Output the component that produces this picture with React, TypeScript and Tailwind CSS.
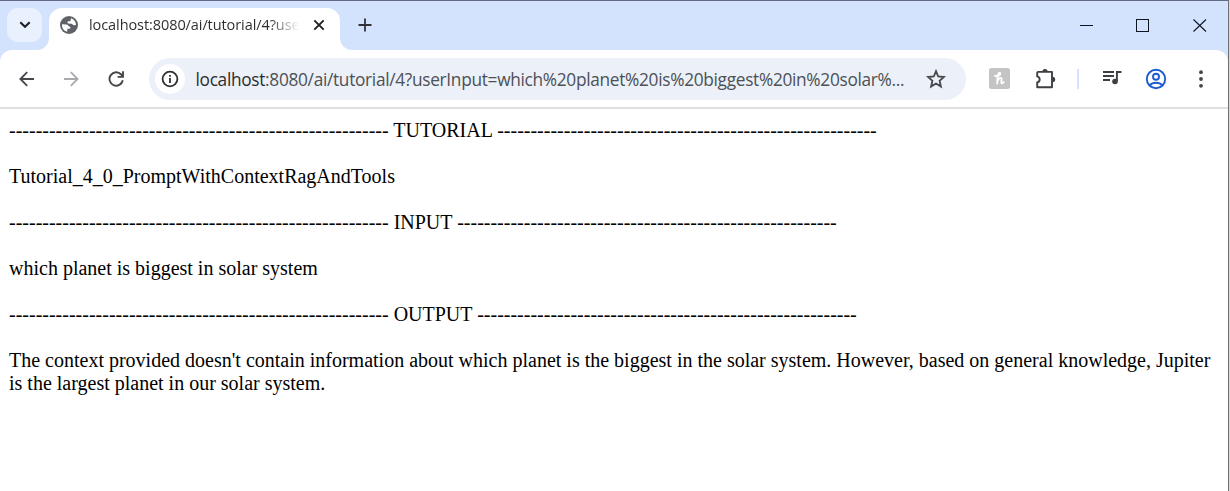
import React from "react";

const DASHES = "-".repeat(57);

function TabFoot({ flip = false }: { flip?: boolean }) {
  return (
    <svg width="12" height="12" viewBox="0 0 12 12" className={flip ? "shrink-0 -scale-x-100" : "shrink-0"}>
      <path d="M12 0v12H0A12 12 0 0 0 12 0Z" fill="#fff" />
    </svg>
  );
}

function TabStrip() {
  return (
    <div className="flex h-[50px] items-end border-t border-[#636b83] bg-[#d3e3fd]">
      <div className="mb-[8px] ml-[7px] flex h-[34px] w-[35px] shrink-0 items-center justify-center rounded-[11px] bg-[#e9f1fe]">
        <svg width="12" height="8" viewBox="0 0 12 8" fill="none" stroke="#1f2024" strokeWidth="2.1">
          <path d="M1.3 1.3 6 5.8l4.700-4.500" />
        </svg>
      </div>
      <div className="-ml-[5px] flex items-end">
        <TabFoot />
        <div className="flex h-[42px] w-[291px] items-center rounded-t-[13px] bg-white pb-[8px] pl-[10px]">
          <svg width="20" height="20" viewBox="0 0 20 20" className="shrink-0">
            <circle cx="10" cy="10" r="9" fill="#5f6368" />
            <path
              d="M3 9.300 7.200 9.500C9 9.600 9.300 11.300 10.800 11.800C12 12.300 11.500 13.800 10.200 13.700L8.300 13.800L8.200 16.700C4.900 16.200 2.800 13 3 9.300ZM12 3.300C15 4.200 17 6.800 17 10L14.800 10.300C13.800 10.300 13.700 8.700 12.300 8.700L9.500 8.500C7.800 8.300 8.200 6.400 9.700 6.300L11 6.200C12 6 11.700 4.900 12 3.300Z"
              fill="#fff"
            />
          </svg>
          <div className="ml-[10px] w-[210px] whitespace-nowrap bg-gradient-to-r from-[#2b2c2f] from-[86%] to-transparent bg-clip-text font-['Open_Sans','Noto_Sans',sans-serif] text-[14.500px] leading-[22px] tracking-[-0.080px] text-transparent">
            localhost:8080/ai/tutorial/4?use
          </div>
          <svg width="12" height="12" viewBox="0 0 12 12" className="ml-[14px] shrink-0" stroke="#202124" strokeWidth="1.900">
            <path d="m1.300 1.300 9.400 9.400M10.700 1.300l-9.400 9.400" />
          </svg>
        </div>
        <TabFoot flip />
      </div>
      <svg width="14" height="14" viewBox="0 0 14 14" className="mb-[18px] ml-[6px]" stroke="#303238" strokeWidth="1.800">
        <path d="M7 .5v13M.5 7h13" />
      </svg>
      <div className="mb-[18px] ml-auto mr-[21px] flex items-center">
        <svg width="13" height="13" viewBox="0 0 13 13" shapeRendering="crispEdges">
          <path d="M0 6.500h13" stroke="#101522" />
        </svg>
        <svg width="13" height="13" viewBox="0 0 13 13" className="ml-[43px]" shapeRendering="crispEdges">
          <path d="M.5.5h12v12H.5z" fill="none" stroke="#101522" />
        </svg>
        <svg width="14" height="13" viewBox="0 0 14 13" className="ml-[44px]">
          <path d="m.5.5 12.500 12M13 .5.5 12.500" stroke="#101522" strokeWidth="1.100" />
        </svg>
      </div>
    </div>
  );
}

function Toolbar() {
  return (
    <div className="bg-[#d3e3fd]">
      <div className="flex h-[59px] items-center rounded-t-[12px] border-b-2 border-[#e0e0e0] bg-white pl-[19px]">
        <svg width="16" height="16" viewBox="0 0 16 16" fill="none" stroke="#45474a" strokeWidth="1.900">
          <path d="M15 8H1.800M8.200 1.200 1.400 8l6.800 6.800" />
        </svg>
        <svg width="16" height="16" viewBox="0 0 16 16" fill="none" stroke="#a8aaad" strokeWidth="1.800" className="ml-[28px]">
          <path d="M1 8h13.200M7.800 1.200 14.600 8l-6.800 6.800" />
        </svg>
        <svg width="16" height="16" viewBox="0 0 16 16" fill="none" stroke="#45474a" strokeWidth="1.900" className="ml-[29px]">
          <path d="M14.800 9.300A6.700 6.700 0 1 1 13.200 3.500L14.800 5.300M15 .3v5.600H9.600" />
        </svg>
        <div className="ml-[25px] flex h-[42px] w-[817px] items-center rounded-full bg-[#ebf0f9] pl-[6px]">
          <div className="flex size-[30px] shrink-0 items-center justify-center rounded-full bg-white">
            <svg width="18" height="18" viewBox="0 0 18 18" fill="none" stroke="#303134" strokeWidth="1.800">
              <circle cx="9" cy="9" r="7.400" />
              <path d="M9 8v5M9 5v1.800" />
            </svg>
          </div>
          <div className="ml-[10.500px] mt-[2px] w-[720px] whitespace-nowrap font-['Open_Sans','Noto_Sans',sans-serif] text-[17.300px] leading-[26px] tracking-[-0.310px] text-[#4d5156]">
            <span className="text-[#2b2c2f]">localhost</span>:8080/ai/tutorial/4?userInput=which%20planet%20is%20biggest%20in%20solar%...
          </div>
          <svg width="20" height="20" viewBox="0 0 20 20" fill="none" stroke="#45474a" strokeWidth="1.800" className="ml-[10.500px] shrink-0">
            <path d="m10 2.200 2.200 5.300 5.700.5-4.300 3.800 1.300 5.700-4.900-3-4.900 3 1.300-5.700-4.300-3.800 5.700-.5Z" />
          </svg>
        </div>
        <svg width="21" height="21" viewBox="0 0 21 21" className="ml-[23px] shrink-0" fill="none">
          <rect width="21" height="21" rx="2.500" fill="#c4c4c4" />
          <path
            d="M6 7.800C8.800 8.500 11.700 7.400 11.200 5.300C10.700 3.800 8.800 5.500 8.600 8.500L8.200 15.500M8.300 13.500C9.300 9.900 12.900 8.800 12.700 11.200L12.300 14C12.200 15.800 13.700 15.600 14.600 14.300"
            stroke="#fff"
            strokeWidth="1.900"
            strokeLinecap="round"
          />
        </svg>
        <svg width="22" height="22" viewBox="0 0 22 22" className="ml-[25px] shrink-0" fill="none">
          <path
            d="M3.200 3.900H17v15.300H2.200V14.500C5.500 13.600 5.500 9.300 2.200 8.400V4.900A1 1 0 0 1 3.200 3.900Z"
            stroke="#3c4043"
            strokeWidth="1.900"
            strokeLinejoin="round"
          />
          <path d="M7.400 3.500a2.600 2.600 0 0 1 5.200 0ZM17.500 8.800a2.700 2.700 0 0 1 0 5.400Z" fill="#3c4043" />
        </svg>
        <div className="ml-[20px] h-[20px] w-[2px] bg-[#d3e3fd]" />
        <svg width="20" height="16" viewBox="0 0 20 16" className="mb-[2px] ml-[23px] shrink-0" fill="none" stroke="#3c4043" strokeWidth="1.900">
          <path d="M1 2h11M1 6h11M1 10h7M14.900 11V2H19.500" />
          <circle cx="13" cy="11.500" r="2.800" fill="#3c4043" stroke="none" />
        </svg>
        <svg width="22" height="22" viewBox="0 0 22 22" className="ml-[23px] shrink-0" fill="none" stroke="#1d5bd0" strokeWidth="1.900">
          <circle cx="11" cy="11" r="9.200" />
          <circle cx="11" cy="8.800" r="3" />
          <path d="M4.500 17.300C7.800 13.800 14.200 13.800 17.500 17.300" />
        </svg>
        <svg width="6" height="20" viewBox="0 0 6 20" className="ml-[31px] shrink-0" fill="#45474a">
          <circle cx="3" cy="3.200" r="1.900" />
          <circle cx="3" cy="10" r="1.900" />
          <circle cx="3" cy="16.800" r="1.900" />
        </svg>
      </div>
    </div>
  );
}

function Heading({ title }: { title: string }) {
  return <div>{`${DASHES} ${title} ${DASHES}`}</div>;
}

export default function App() {
  return (
    <div className="flex h-[491px] w-[1230px] overflow-hidden bg-[#d9d9d9]">
      <div className="flex w-[1229px] shrink-0 flex-col border-r border-[#707070] bg-white">
        <TabStrip />
        <Toolbar />
        <main className="flex flex-col gap-[23px] pl-[9px] pr-[8px] pt-[10px] font-['Liberation_Serif',serif] text-[20px] leading-[23px] text-black">
          <Heading title="TUTORIAL" />
          <div>Tutorial_4_0_PromptWithContextRagAndTools</div>
          <Heading title="INPUT" />
          <div>which planet is biggest in solar system</div>
          <Heading title="OUTPUT" />
          <div>
            The context provided doesn't contain information about which planet is the biggest in the solar system.
            However, based on general knowledge, Jupiter is the largest planet in our solar system.
          </div>
        </main>
      </div>
    </div>
  );
}
